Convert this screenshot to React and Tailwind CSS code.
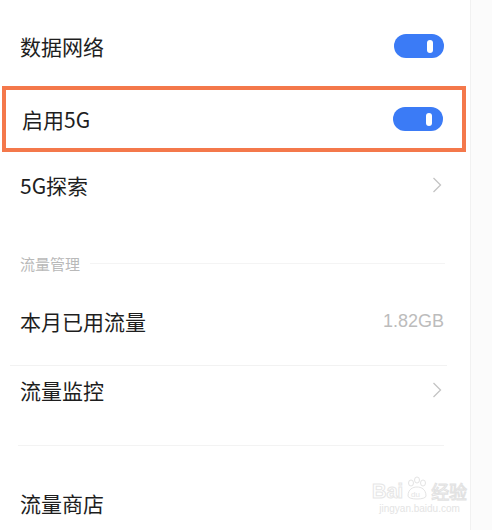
import React from 'react'

const font = { fontFamily: '"Noto Sans CJK SC", "Liberation Sans", sans-serif' }

function Toggle() {
  return (
    <div className="w-[50px] h-[24px] rounded-full bg-[#3b7bf6] flex items-center justify-end pr-[11px]">
      <div className="w-[6px] h-[13px] rounded-full bg-white" />
    </div>
  )
}

function Chevron() {
  return (
    <svg width="10" height="16" viewBox="0 0 10 16" fill="none">
      <path d="M1.5 1 L8.5 8 L1.5 15" stroke="#c4c4c4" strokeWidth="1.3" />
    </svg>
  )
}

function Row({ label, right, className = '' }) {
  return (
    <div className={`shrink-0 flex items-center justify-between pl-[20px] pr-[26px] ${className}`}>
      <span className="text-[21px] leading-[28px] text-[#1e1e1e]">{label}</span>
      {right}
    </div>
  )
}

export default function App() {
  return (
    <div className="w-[492px] h-[530px] overflow-hidden bg-[#fbfbfb] flex relative" style={font}>
      <div className="w-[471px] h-full bg-white border-r border-[#f1f1f1] flex flex-col">
        <Row label="数据网络" right={<Toggle />} className="h-[86px] pt-[6px]" />

        <div className="shrink-0 ml-[2px] w-[464px] h-[66px] border-[4px] border-[#f4784b] flex items-center justify-between pl-[16px] pr-[19px]">
          <span className="text-[21px] leading-[28px] text-[#1e1e1e]">启用5G</span>
          <Toggle />
        </div>

        <Row label="5G探索" right={<div className="mr-[2px]"><Chevron /></div>} className="h-[66px]" />

        <div className="shrink-0 h-[59px] flex items-end pb-[5px] pl-[20px] pr-[25px]">
          <span className="text-[15px] leading-[16px] text-[#b9b9b9]">流量管理</span>
          <div className="flex-1 h-px bg-[#f4f4f4] ml-[10px] mb-[8px]" />
        </div>

        <Row
          label="本月已用流量"
          right={<span className="text-[18px] text-[#bcbcbc]" style={{ fontFamily: '"Liberation Sans", sans-serif' }}>1.82GB</span>}
          className="h-[88px]"
        />
        <div className="shrink-0 h-px bg-[#f2f2f2] ml-[10px] mr-[23px]" />

        <Row label="流量监控" right={<div className="mr-[2px]"><Chevron /></div>} className="h-[48px]" />
        <div className="shrink-0 h-[31px]" />
        <div className="shrink-0 h-px bg-[#f3f3f3] ml-[18px] mr-[26px]" />

        <Row label="流量商店" className="h-[84px] pt-[30px]" />
      </div>

      {/* watermark */}
      <div className="absolute left-[372px] top-[476px] flex flex-col items-center select-none">
        <div className="flex items-end gap-[2px]">
          <span className="text-[20px] leading-[22px] font-bold" style={{ fontFamily: '"Liberation Sans", sans-serif', color: '#fff', WebkitTextStroke: '1px #e6e6e6' }}>Bai</span>
          <svg width="24" height="26" viewBox="0 0 24 26" fill="none" stroke="#e4e4e4" strokeWidth="1">
            <ellipse cx="6" cy="7" rx="2.5" ry="3" />
            <ellipse cx="12" cy="4" rx="2.5" ry="3" />
            <ellipse cx="18" cy="7" rx="2.5" ry="3" />
            <path d="M3 20 C3 13 8 11 12 11 C16 11 21 13 21 20 C21 24 3 24 3 20 Z" />
            <text x="6" y="21" fontSize="8" fill="#e4e4e4" stroke="none" fontFamily="Liberation Sans">du</text>
          </svg>
          <span className="text-[18px] leading-[22px]" style={{ color: '#fff', WebkitTextStroke: '1px #e2e2e2' }}>经验</span>
        </div>
        <span className="text-[10px] leading-[14px] text-[#e4e4e4]" style={{ fontFamily: '"Liberation Sans", sans-serif' }}>jingyan.baidu.com</span>
      </div>
    </div>
  )
}
